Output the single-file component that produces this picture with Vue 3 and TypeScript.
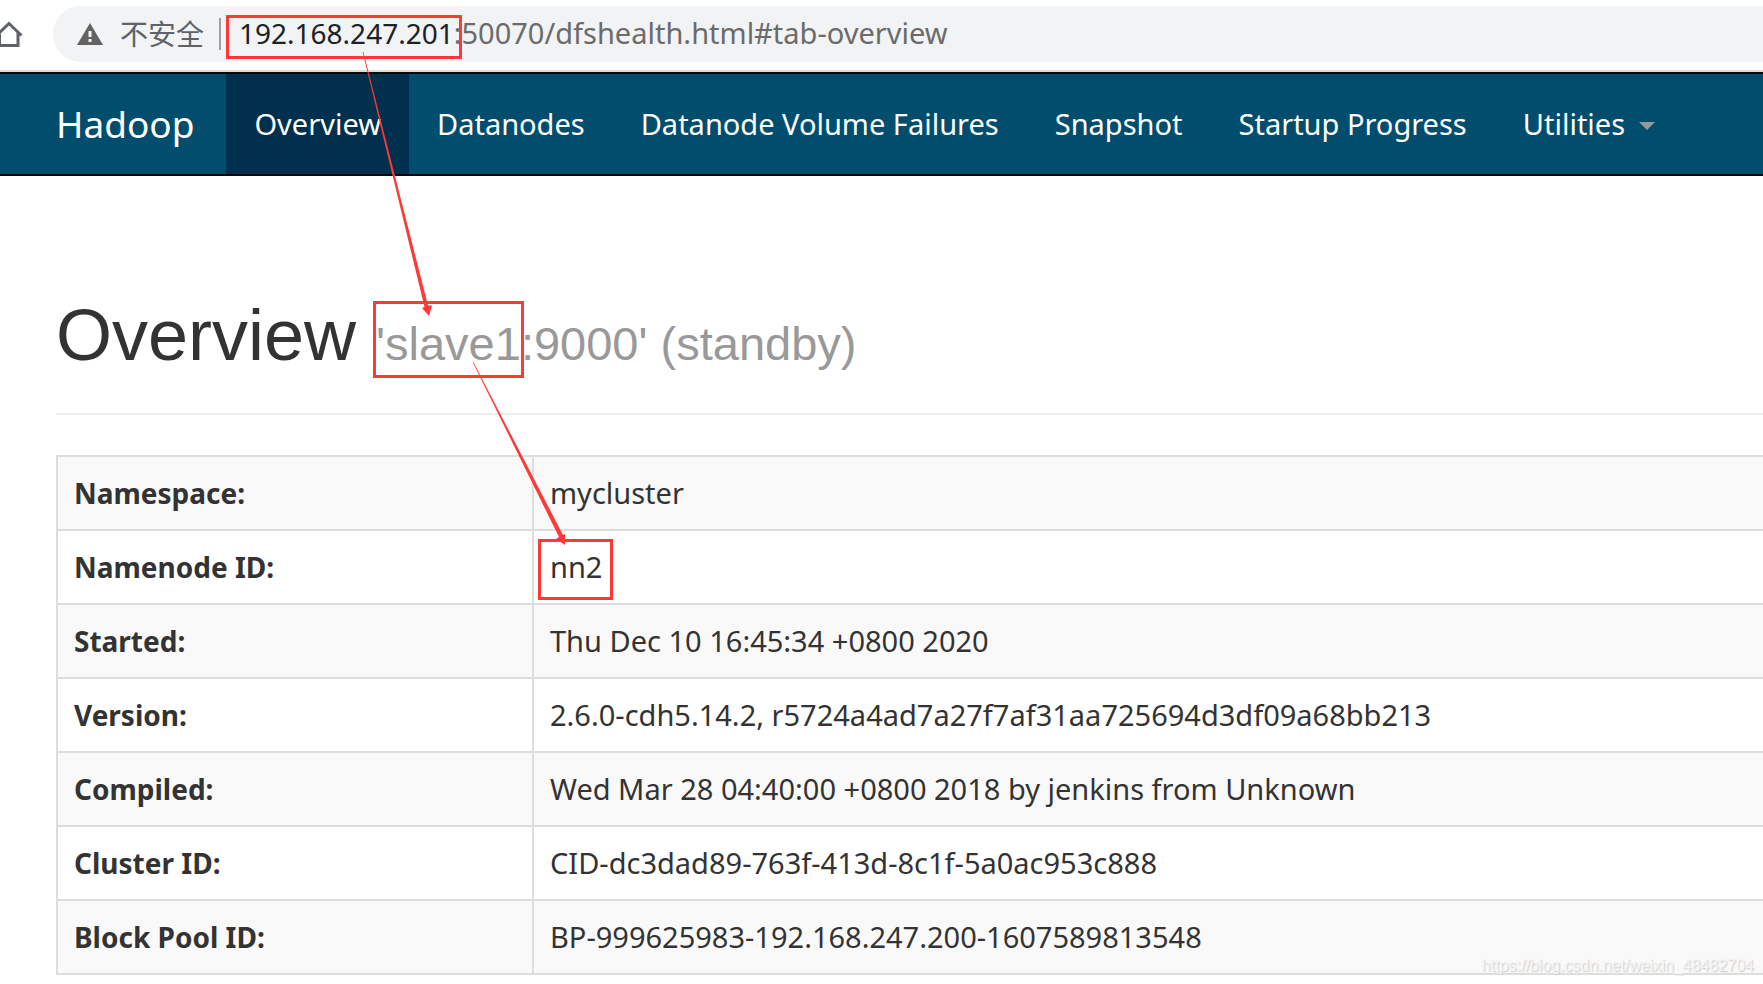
<script setup lang="ts">
interface NavItem {
  label: string
  active?: boolean
  menu?: boolean
}

const navItems: NavItem[] = [
  { label: 'Overview', active: true },
  { label: 'Datanodes' },
  { label: 'Datanode Volume Failures' },
  { label: 'Snapshot' },
  { label: 'Startup Progress' },
  { label: 'Utilities', menu: true },
]

const rows: { name: string; value: string }[] = [
  { name: 'Namespace:', value: 'mycluster' },
  { name: 'Namenode ID:', value: 'nn2' },
  { name: 'Started:', value: 'Thu Dec 10 16:45:34 +0800 2020' },
  { name: 'Version:', value: '2.6.0-cdh5.14.2, r5724a4ad7a27f7af31aa725694d3df09a68bb213' },
  { name: 'Compiled:', value: 'Wed Mar 28 04:40:00 +0800 2018 by jenkins from Unknown' },
  { name: 'Cluster ID:', value: 'CID-dc3dad89-763f-413d-8c1f-5a0ac953c888' },
  { name: 'Block Pool ID:', value: 'BP-999625983-192.168.247.200-1607589813548' },
]
</script>

<template>
  <div class="window">
    <div class="toolbar">
      <button class="home" type="button" aria-label="Home">
        <svg width="24" height="28" viewBox="0 0 24 28">
          <path d="M-3.500 14.500 L9 2.500 L21.500 14.500 M-0.500 13 V24.500 H18 V11" fill="none" stroke="#5f6368" stroke-width="3" />
        </svg>
      </button>
      <div class="omnibox">
        <svg class="warn" width="26" height="22" viewBox="0 0 26 22">
          <path d="M13 0 L26 22 H0 Z" fill="#636363" />
          <path d="M11.5 8 h3 v6 h-3 Z M11.5 16 h3 v3 h-3 Z" fill="#f1f3f4" />
        </svg>
        <span class="insecure">不安全</span>
        <span class="divider"></span>
        <span class="url"><span class="host">192.168.247.201</span>:50070/dfshealth.html#tab-overview</span>
      </div>
    </div>

    <nav class="navbar">
      <a class="brand" href="#">Hadoop</a>
      <a
        v-for="item in navItems"
        :key="item.label"
        class="nav-link"
        :class="{ active: item.active }"
        href="#"
      >{{ item.label }}<span v-if="item.menu" class="caret"></span></a>
    </nav>

    <main class="content">
      <h1>Overview <small>'slave1:9000' (standby)</small></h1>
      <table>
        <tbody>
          <tr v-for="row in rows" :key="row.name">
            <th scope="row">{{ row.name }}</th>
            <td>{{ row.value }}</td>
          </tr>
        </tbody>
      </table>
    </main>

    <svg class="marks" width="640" height="620" viewBox="0 0 640 620">
      <g fill="none" stroke="#ff3838" stroke-width="3">
        <rect x="227.5" y="16.5" width="233" height="41" />
        <rect x="374.5" y="302.5" width="148" height="74" />
        <rect x="539.5" y="540.5" width="72" height="58" />
      </g>
      <g fill="#ff3838">
        <path d="M362.600 52 H363.400 L428 305.500 L432 305.500 L429 316 L422 308 L424.500 307 Z" />
        <path d="M472.600 362 H473.400 L563 535 L565 534 L565 545 L556 539 L559 537 Z" />
      </g>
    </svg>
    <span class="watermark">https://blog.csdn.net/weixin_48482704</span>
  </div>
</template>

<style>
body {
  margin: 0;
  background: #fff;
}
</style>

<style scoped>
.window {
  position: relative;
  overflow: hidden;
  min-height: 100vh;
  font-family: "Noto Sans", "Noto Sans CJK SC", sans-serif;
  font-size: 28px;
  line-height: 40px;
  color: #333;
}
.toolbar {
  display: flex;
  align-items: center;
  height: 70px;
  border-bottom: 2px solid #dadce0;
}
.home {
  display: flex;
  width: 53px;
  padding: 0;
  border: 0;
  background: none;
}
.omnibox {
  display: flex;
  flex: 1;
  align-items: center;
  height: 56px;
  margin: 0 -28px 2px 0;
  padding-left: 24px;
  border-radius: 28px;
  background: #f1f3f4;
  color: #5f6368;
  white-space: nowrap;
}
.insecure {
  margin-left: 17px;
  padding-bottom: 2px;
  font-family: "Noto Sans CJK SC", sans-serif;
}
.divider {
  width: 2px;
  height: 32px;
  margin: 0 18px 0 15px;
  background: #9aa0a6;
}
.url {
  padding-bottom: 2px;
  font-size: 29px;
  color: #6b6b6b;
}
.host {
  font-size: 28px;
  color: #202124;
}
.navbar {
  display: flex;
  align-items: stretch;
  height: 100px;
  border: solid #080808;
  border-width: 2px 0;
  background: #004d6e;
  font-size: 29px;
  white-space: nowrap;
}
.navbar a {
  display: flex;
  align-items: center;
  padding: 0 28px;
  color: #fff;
  text-decoration: none;
}
.navbar .brand {
  padding-left: 56px;
  padding-right: 32px;
  font-size: 37px;
}
.navbar .active {
  background: #00304d;
}
.caret {
  margin: 4px 0 0 14px;
  border: solid transparent;
  border-width: 8px 8px 0;
  border-top-color: #999;
}
.content {
  padding-left: 56px;
}
h1 {
  margin: 0 0 40px;
  padding: 120px 0 38px;
  border-bottom: 2px solid #eee;
  font: 400 72px/79px "Liberation Sans", Arial, sans-serif;
  white-space: nowrap;
}
small {
  font-size: 47px;
  line-height: 47px;
  color: #999;
}
table {
  width: calc(100% + 2px);
  border-collapse: separate;
  border-spacing: 0;
  border: solid #ddd;
  border-width: 2px 0 0 2px;
}
th,
td {
  height: 40px;
  padding: 16px;
  border-bottom: 2px solid #ddd;
  text-align: left;
  white-space: nowrap;
}
th {
  width: 442px;
  font-weight: 700;
  border-right: 2px solid #ddd;
}
td {
  font-size: 29px;
}
tr:nth-child(odd) {
  background: #f9f9f9;
}
.marks {
  position: absolute;
  top: 0;
  left: 0;
  pointer-events: none;
}
.watermark {
  position: absolute;
  right: 9px;
  top: 956px;
  font: 16px/20px "Liberation Sans", Arial, sans-serif;
  color: #f4f4f4;
  text-shadow: 1px 1px 1px #ccc;
}
</style>
